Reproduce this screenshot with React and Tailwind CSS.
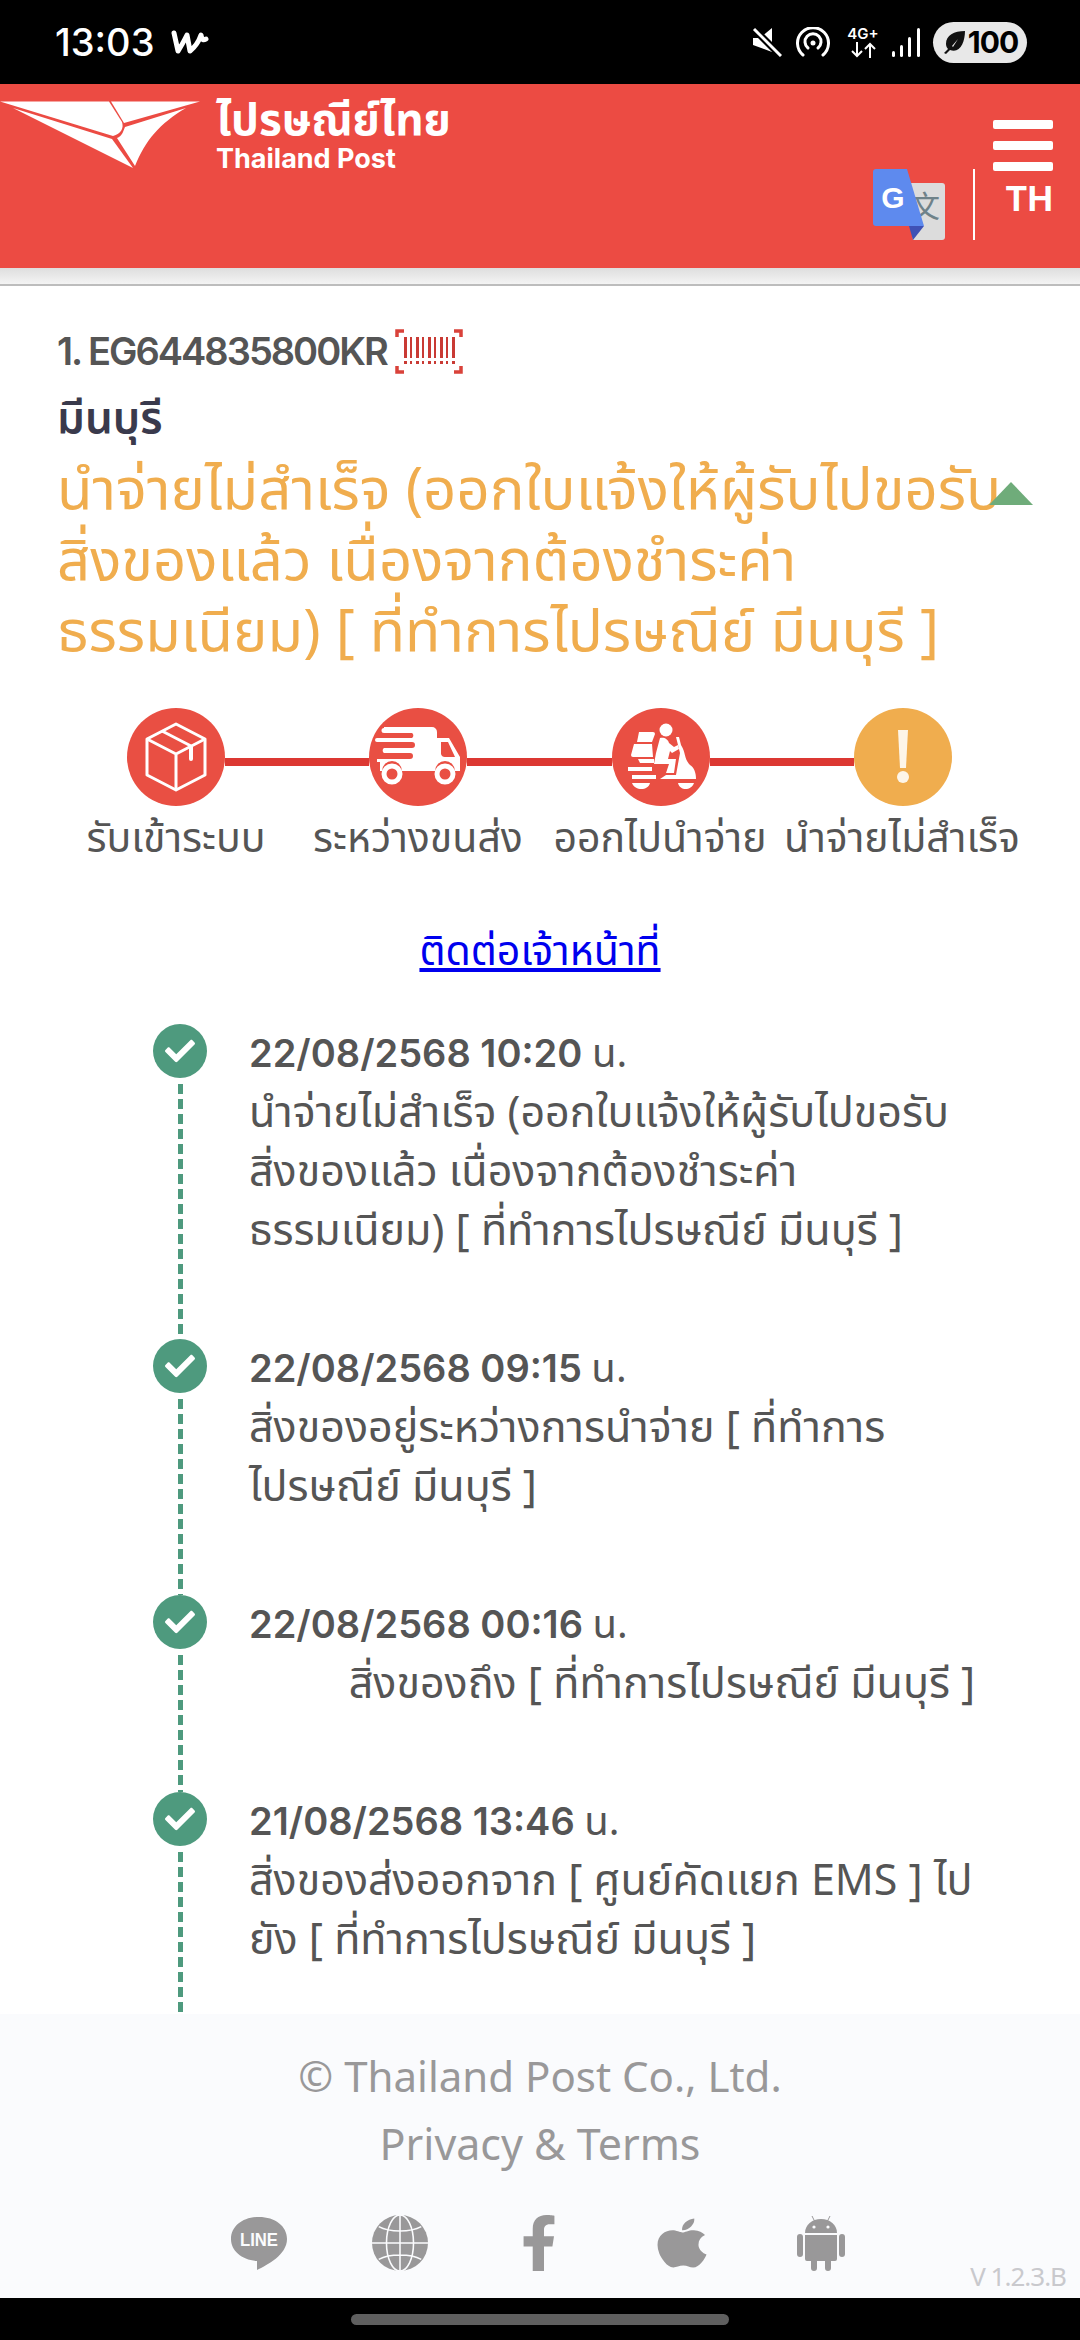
import { FaApple, FaCheck, FaFacebookF } from 'react-icons/fa';

const steps = ['รับเข้าระบบ', 'ระหว่างขนส่ง', 'ออกไปนำจ่าย', 'นำจ่ายไม่สำเร็จ'];

const events = [
  {
    date: '22/08/2568 10:20',
    lines: ['นำจ่ายไม่สำเร็จ (ออกใบแจ้งให้ผู้รับไปขอรับ', 'สิ่งของแล้ว เนื่องจากต้องชำระค่า', 'ธรรมเนียม) [ ที่ทำการไปรษณีย์ มีนบุรี ]'],
    height: 'h-[315px]',
  },
  {
    date: '22/08/2568 09:15',
    lines: ['สิ่งของอยู่ระหว่างการนำจ่าย [ ที่ทำการ', 'ไปรษณีย์ มีนบุรี ]'],
    height: 'h-[256px]',
  },
  {
    date: '22/08/2568 00:16',
    lines: ['สิ่งของถึง [ ที่ทำการไปรษณีย์ มีนบุรี ]'],
    height: 'h-[197px]',
    center: true,
  },
  {
    date: '21/08/2568 13:46',
    lines: ['สิ่งของส่งออกจาก [ ศูนย์คัดแยก EMS ] ไป', 'ยัง [ ที่ทำการไปรษณีย์ มีนบุรี ]'],
    height: 'h-[260px]',
  },
];

const Logo = () => (
  <svg viewBox="0 0 200 68" className="h-[68px] w-[200px]" fill="#fff">
    <path d="M0 0.5H109L122 21C124 27 121 33 113 35Z" />
    <path d="M111 0.5H200L124 22Z" />
    <path d="M13 7L112 38L133 67Z" />
    <path d="M186 7L125 26C123 31 122 35 117 37L135 65C145 40 160 22 186 7Z" />
  </svg>
);

const Translate = () => (
  <svg viewBox="0 0 72 71" className="h-[71px] w-[72px]">
    <path d="M32 14H69a3 3 0 0 1 3 3V68a3 3 0 0 1-3 3H40Z" fill="#dcdcdc" />
    <text x="52" y="48" fontSize="30" fill="#6f8289" textAnchor="middle" fontFamily="'Noto Sans CJK SC',sans-serif">文</text>
    <path d="M3 0H34L51 57H3a3 3 0 0 1-3-3V3a3 3 0 0 1 3-3Z" fill="#5e8aee" />
    <path d="M36 57H51L40 71Z" fill="#3f51b5" />
    <text x="20" y="39" fontSize="30" fontWeight="700" fill="#fff" textAnchor="middle" fontFamily="'Liberation Sans',sans-serif">G</text>
  </svg>
);

const BoxIcon = () => (
  <svg viewBox="0 0 62 70" className="h-[70px] w-[62px]" fill="none" stroke="#fff" strokeWidth="3" strokeLinejoin="round">
    <path d="M31 2L60 17V53L31 68L2 53V17Z" />
    <path d="M2 17L31 32L60 17M31 32V68" />
    <path d="M17 9L46 24" />
    <path d="M46 25V37" strokeWidth="4" strokeLinecap="round" />
  </svg>
);

const TruckIcon = () => (
  <svg viewBox="0 0 88 60" className="h-[60px] w-[88px]" fill="#fff">
    <path d="M10 0H58a5 5 0 0 1 5 5V11H75L86 30V44H81a10 10 0 0 0-20 0H28a10 10 0 0 0-20 0H6V35H3V32H36a3 3 0 0 0 0-6H10a3 3 0 0 1 0-5H38a3 3 0 0 0 0-6H3a2 2 0 0 1 0-4H38a3 3 0 0 0 0-5H10a2 2 0 0 1 0-5Z" />
    <path d="M67 15V27a4 4 0 0 0 4 3H81L74 15Z" fill="#e94f43" />
    <circle cx="18" cy="47" r="8" fill="none" stroke="#fff" strokeWidth="5" />
    <circle cx="71" cy="47" r="8" fill="none" stroke="#fff" strokeWidth="5" />
  </svg>
);

const RiderIcon = () => (
  <svg viewBox="0 0 70 68" className="h-[68px] w-[70px]" fill="#fff">
    <circle cx="40" cy="7" r="6.5" />
    <path d="M13 9H27a2 2 0 0 1 2 2L26 19H11ZM8 21H26L27 34H7a2 2 0 0 1-2-2Z" />
    <path d="M34 15C38 14 42 16 43 20L48 24L52 22L53 26L46 30L44 28L42 36H50L48 50H40L43 41H28L30 30Z" />
    <path d="M50 14L53 14L55 22C60 30 58 36 64 42C68 44 70 50 70 56H34L40 52H50L54 30Z" />
    <path d="M12 36H28V40H14ZM2 44H26V48H2ZM6 52H30V56H6Z" />
    <path d="M6 60H24C22 68 9 68 6 60ZM52 60H68C65 68 54 68 52 60Z" />
  </svg>
);

const AlertIcon = () => (
  <svg viewBox="0 0 14 54" className="h-[54px] w-[14px]" fill="#fdf5e8">
    <path d="M2 0H12L10 38H4Z" />
    <circle cx="7" cy="47" r="6" />
  </svg>
);

const Barcode = () => (
  <svg viewBox="0 0 68 45" className="h-[45px] w-[68px]">
    <path d="M9 2H2V8M59 2H66V8M9 43H2V37M59 43H66V37" fill="none" stroke="#d9423a" strokeWidth="3.5" />
    {[9, 15, 21, 27, 33, 39, 45, 51, 57].map((x, i) => (
      <g key={x} fill="#c93a34">
        <rect x={x} y="8" width={i % 2 ? 2 : 3} height="21" />
        <rect x={x} y="32" width={i % 2 ? 2 : 3} height="3" />
      </g>
    ))}
  </svg>
);

const LineIcon = () => (
  <svg viewBox="0 0 56 56" className="h-[56px] w-[56px]">
    <path d="M28 2C12 2 0 11 0 24C0 36 11 45 26 46L26 55C36 50 56 40 56 24C56 11 44 2 28 2Z" fill="#999899" />
    <text x="28" y="31" fontSize="18" fontWeight="700" fill="#fbfcfe" textAnchor="middle" fontFamily="'Liberation Sans',sans-serif" textLength="38" lengthAdjust="spacingAndGlyphs">LINE</text>
  </svg>
);

const GlobeIcon = () => (
  <svg viewBox="0 0 58 58" className="h-[56px] w-[58px]">
    <ellipse cx="29" cy="29" rx="29" ry="29" fill="#999899" />
    <g fill="none" stroke="#fbfcfe" strokeWidth="1.6">
      <ellipse cx="29" cy="29" rx="14" ry="29" />
      <path d="M29 0V58M0 29H58M7 12C18 18 40 18 51 12M7 46C18 40 40 40 51 46" />
    </g>
  </svg>
);

const AndroidIcon = () => (
  <svg viewBox="0 0 48 56" className="h-[56px] w-[48px]" fill="#999899">
    <path d="M15 1L18 7M33 1L30 7" stroke="#999899" strokeWidth="1" />
    <path d="M8 18C8 10 15 4 24 4C33 4 40 10 40 18Z" />
    <circle cx="17" cy="12" r="1.6" fill="#fafbfd" />
    <circle cx="31" cy="12" r="1.6" fill="#fafbfd" />
    <path d="M8 20H40V44a2 2 0 0 1-2 2H34V53a3 3 0 0 1-6 0V46H20V53a3 3 0 0 1-6 0V46H10a2 2 0 0 1-2-2Z" />
    <rect x="0" y="19" width="6" height="23" rx="3" />
    <rect x="42" y="19" width="6" height="23" rx="3" />
  </svg>
);

const App = () => {
  return (
    <div className="flex h-[2340px] w-[1080px] flex-col overflow-hidden bg-white font-['Noto_Sans','Noto_Sans_Thai',sans-serif] text-[#555]">
      {/* status bar */}
      <div className="flex h-[84px] shrink-0 items-center bg-black pl-[55px] pr-[53px] text-white">
        <span className="font-['Inter',sans-serif] text-[38px] font-medium leading-none">13:03</span>
        <svg viewBox="0 0 38 30" className="ml-[17px] h-[30px] w-[38px]" fill="none" stroke="#fff" strokeWidth="5" strokeLinecap="round" strokeLinejoin="round">
          <path d="M3 6L7 24C11 18 14 12 16 8L19 24C24 20 28 14 30 8C31 14 33 13 35 12" />
        </svg>
        <div className="ml-auto flex items-center">
          <svg viewBox="0 0 30 30" className="h-[30px] w-[30px]" fill="#fff">
            <path d="M1 11H8L20 1V25L1 18Z" />
            <path d="M2 2L29 29" stroke="#000" strokeWidth="7" />
            <path d="M2 2L29 29" stroke="#fff" strokeWidth="3" />
          </svg>
          <svg viewBox="0 0 34 30" className="ml-[14px] h-[30px] w-[34px]" fill="none" stroke="#fff" strokeWidth="3" strokeLinecap="round">
            <path d="M7 28A15.5 15.5 0 1 1 27 28" />
            <path d="M12 21A8 8 0 1 1 22 21" />
            <circle cx="17" cy="16" r="2.5" fill="#fff" stroke="none" />
          </svg>
          <div className="ml-[16px] flex w-[34px] flex-col items-center text-center">
            <span className="font-['Inter',sans-serif] text-[15px] font-semibold leading-[16px]">4G+</span>
            <svg viewBox="0 0 26 16" className="h-[16px] w-[26px]" fill="none" stroke="#fff" strokeWidth="2">
              <path d="M7 0V14M2 9L7 14L12 9M20 16V2M15 7L20 2L25 7" />
            </svg>
          </div>
          <svg viewBox="0 0 28 30" className="ml-[12px] h-[30px] w-[28px]" fill="#fff">
            <rect x="0" y="24" width="3" height="6" rx="1.5" />
            <rect x="8" y="18" width="3" height="12" rx="1.5" />
            <rect x="16" y="10" width="3" height="20" rx="1.5" />
            <rect x="25" y="1" width="3" height="29" rx="1.5" />
          </svg>
          <div className="ml-[13px] flex h-[41px] w-[94px] items-center justify-center gap-[2px] rounded-full bg-[#e8e8e8] text-black">
            <svg viewBox="0 0 24 24" className="h-[24px] w-[24px]" fill="#111">
              <path d="M23 1C12 1 4 5 4 14C4 16 5 18 6 19L2 23L4 24L8 20C18 24 23 12 23 1ZM10 16L16 9L11 17Z" />
            </svg>
            <span className="font-['Inter',sans-serif] text-[30px] font-bold leading-none tracking-[-1px]">100</span>
          </div>
        </div>
      </div>

      {/* header */}
      <header className="flex h-[184px] shrink-0 bg-[#ec4b43] text-white">
        <div className="mt-[17px]">
          <Logo />
        </div>
        <div className="ml-[16px] mt-[8px]">
          <div className="text-[44px] font-bold leading-[52px]">ไปรษณีย์ไทย</div>
          <div className="font-['Inter',sans-serif] text-[27px] font-bold leading-[30px]">Thailand Post</div>
        </div>
        <div className="ml-auto mr-[27px] mt-[36px] flex h-[120px]">
          <div className="mt-[49px] h-[71px]">
            <Translate />
          </div>
          <div className="ml-[28px] mt-[49px] h-[71px] w-[2px] bg-white" />
          <div className="ml-[18px] flex w-[60px] flex-col items-end">
            <div className="flex w-[60px] flex-col gap-[12px]">
              <div className="h-[9px] rounded-[2px] bg-white" />
              <div className="h-[9px] rounded-[2px] bg-white" />
              <div className="h-[9px] rounded-[2px] bg-white" />
            </div>
            <div className="mt-[6px] font-['Inter',sans-serif] text-[34px] font-bold leading-[44px]">TH</div>
          </div>
        </div>
      </header>
      <div className="h-[16px] shrink-0 bg-gradient-to-b from-[#dedede] to-[#f4f4f4]" />
      <div className="h-[2px] shrink-0 bg-[#bdbdbd]" />

      <main className="min-h-0 flex-1 overflow-hidden">
        {/* tracking info */}
        <div className="pl-[57px] pr-[47px] pt-[42px]">
          <div className="flex h-[46px] items-center">
            <span className="font-['Inter',sans-serif] text-[38px] font-semibold tracking-[-2px]">1. EG644835800KR</span>
            <span className="ml-[8px]">
              <Barcode />
            </span>
          </div>
          <div className="mt-[17px] text-[44px] font-semibold leading-[50px] text-[#3a3a4c]">มีนบุรี</div>
          <div className="relative mt-[10px] text-[58px] leading-[71px] text-[#f0ad4e]">
            <div className="whitespace-nowrap">นำจ่ายไม่สำเร็จ (ออกใบแจ้งให้ผู้รับไปขอรับ</div>
            <div className="whitespace-nowrap">สิ่งของแล้ว เนื่องจากต้องชำระค่า</div>
            <div className="whitespace-nowrap">ธรรมเนียม) [ ที่ทำการไปรษณีย์ มีนบุรี ]</div>
            <div className="absolute right-[0px] top-[31px] h-0 w-0 border-x-[22px] border-b-[23px] border-x-transparent border-b-[#6fac7a]" />
          </div>
        </div>

        {/* progress steps */}
        <div className="mt-[44px] flex items-center pl-[127px] pr-[128px]">
          <div className="flex h-[98px] w-[98px] shrink-0 items-center justify-center rounded-full bg-[#e94f43]">
            <BoxIcon />
          </div>
          <div className="mt-[10px] h-[8px] flex-1 bg-[#dc3832]" />
          <div className="flex h-[98px] w-[98px] shrink-0 items-center justify-center rounded-full bg-[#e94f43]">
            <TruckIcon />
          </div>
          <div className="mt-[10px] h-[8px] flex-1 bg-[#dc3832]" />
          <div className="flex h-[98px] w-[98px] shrink-0 items-center justify-center rounded-full bg-[#e94f43]">
            <RiderIcon />
          </div>
          <div className="mt-[10px] h-[8px] flex-1 bg-[#dc3832]" />
          <div className="flex h-[98px] w-[98px] shrink-0 items-center justify-center rounded-full bg-[#f0ad4e]">
            <AlertIcon />
          </div>
        </div>
        <div className="mt-[6px] grid grid-cols-[242px_242px_242px_242px] pl-[55px] text-[41px] leading-[48px]">
          {steps.map((step) => (
            <div key={step} className="flex justify-center whitespace-nowrap">
              {step}
            </div>
          ))}
        </div>

        <div className="mt-[64px] text-center text-[41px] leading-[50px]">
          <a href="#" className="text-[#0000ee] underline">ติดต่อเจ้าหน้าที่</a>
        </div>

        {/* timeline */}
        <div className="mt-[50px] pl-[153px]">
          {events.map((ev) => (
            <div key={ev.date} className={`flex ${ev.height}`}>
              <div className="flex w-[54px] shrink-0 flex-col items-center">
                <div className="flex h-[54px] w-[54px] shrink-0 items-center justify-center rounded-full bg-[#4e9a7e] text-[30px] text-white">
                  <FaCheck />
                </div>
                <div className="mt-[6px] w-[5px] flex-1 bg-[repeating-linear-gradient(to_bottom,#4e9a7e_0,#4e9a7e_10px,transparent_10px,transparent_15px)]" />
              </div>
              <div className="ml-[42px] w-[826px] text-[43px] leading-[59px]">
                <div className="font-['Inter',sans-serif] text-[38px] font-semibold leading-[55px]">
                  {ev.date} <span className="font-['Noto_Sans','Noto_Sans_Thai',sans-serif] text-[40px] font-normal">น.</span>
                </div>
                {ev.lines.map((line) => (
                  <div key={line} className={ev.center ? 'whitespace-nowrap text-center' : 'whitespace-nowrap'}>
                    {line}
                  </div>
                ))}
              </div>
            </div>
          ))}
        </div>
      </main>

      {/* footer */}
      <footer className="relative h-[284px] shrink-0 bg-[#fafbfd] pt-[28px] text-center text-[42px] leading-[68px] text-[#999899]">
        <div>© Thailand Post Co., Ltd.</div>
        <div className="text-[43px]">Privacy &amp; Terms</div>
        <div className="mt-[37px] flex items-start pl-[231px]">
          <LineIcon />
          <div className="ml-[84px]">
            <GlobeIcon />
          </div>
          <FaFacebookF className="ml-[92px] h-[56px] w-[36px]" preserveAspectRatio="none" />
          <FaApple className="ml-[100px] h-[56px] w-[50px]" preserveAspectRatio="none" />
          <div className="ml-[90px]">
            <AndroidIcon />
          </div>
        </div>
        <span className="absolute bottom-[6px] right-[14px] text-[26px] leading-[32px] tracking-[-1px] text-[#c9c9cd]">V 1.2.3.B</span>
      </footer>

      {/* nav bar */}
      <div className="flex h-[42px] shrink-0 items-center justify-center bg-black">
        <div className="h-[11px] w-[378px] rounded-full bg-[#5f5f5f]" />
      </div>
    </div>
  );
};

export default App;
